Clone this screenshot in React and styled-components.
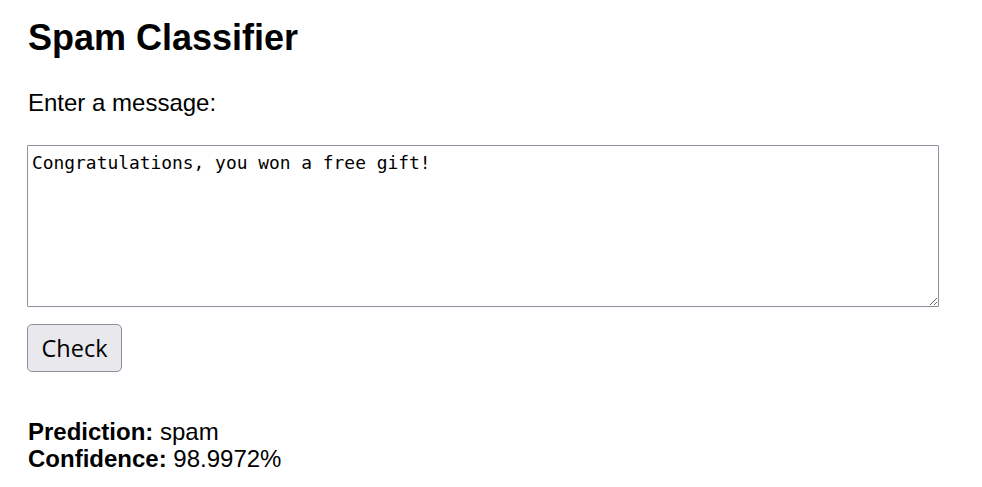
import React from "react";
import styled, { createGlobalStyle } from "styled-components";

const Global = createGlobalStyle`
  html, body { margin: 0; padding: 0; background: #ffffff; }
  body { font-family: "Liberation Sans", Arial, sans-serif; color: #000; }
`;

const Page = styled.main`
  padding: 17px 27px 0 27px;
  display: flex;
  flex-direction: column;
  align-items: flex-start;
`;

const Title = styled.h1`
  margin: 0 0 31px 1px;
  font-size: 36px;
  line-height: 41px;
  font-weight: 700;
`;

const Label = styled.label`
  display: block;
  margin: 0 0 28px 1px;
  font-size: 24px;
  line-height: 28px;
`;

const MessageBox = styled.textarea`
  display: block;
  box-sizing: border-box;
  width: 912px;
  height: 162px;
  margin: 0 0 17px 0;
  padding: 7px 4px 6px 4px;
  border: 1px solid #8f8f9d;
  border-radius: 1px;
  font-family: "DejaVu Sans Mono", "Liberation Mono", monospace;
  font-size: 17.9px;
  line-height: 20px;
  color: #000;
  background: #fff;
  resize: both;
  outline: none;
`;

const CheckButton = styled.button`
  box-sizing: border-box;
  width: 95px;
  height: 48px;
  margin: 0 0 46px 0;
  padding: 0;
  display: flex;
  align-items: center;
  justify-content: center;
  border: 1px solid #8f8f9d;
  border-radius: 5px;
  background: #e9e9ed;
  color: #000;
  font-family: "Open Sans", "Noto Sans", sans-serif;
  font-size: 23.5px;
  line-height: 28px;
  cursor: pointer;
`;

const Result = styled.div`
  margin-left: 1px;
  font-size: 24px;
  line-height: 27px;
`;

const ResultLine = styled.div``;

const Key = styled.strong`
  font-weight: 700;
`;

export default function App() {
  return (
    <>
      <Global />
      <Page>
        <Title>Spam Classifier</Title>
        <Label htmlFor="msg">Enter a message:</Label>
        <MessageBox
          id="msg"
          defaultValue="Congratulations, you won a free gift!"
        />
        <CheckButton type="button">Check</CheckButton>
        <Result>
          <ResultLine>
            <Key>Prediction:</Key> spam
          </ResultLine>
          <ResultLine>
            <Key>Confidence:</Key> 98.9972%
          </ResultLine>
        </Result>
      </Page>
    </>
  );
}
